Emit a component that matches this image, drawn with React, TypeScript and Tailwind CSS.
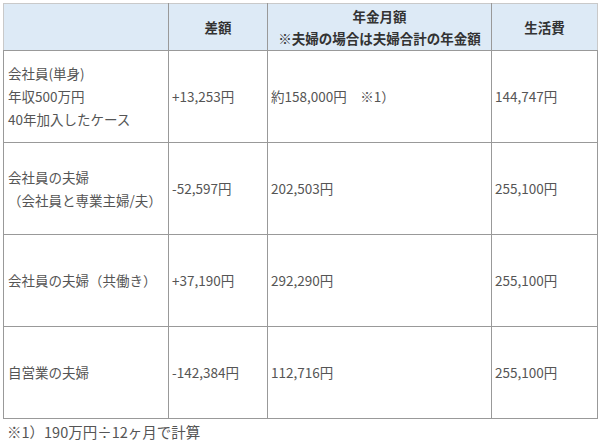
const rows = [
	{
		label: ["会社員(単身)", "年収500万円", "40年加入したケース"],
		diff: "+13,253円",
		pension: "約158,000円　※1）",
		living: "144,747円",
	},
	{
		label: ["会社員の夫婦", "（会社員と専業主婦/夫）"],
		diff: "-52,597円",
		pension: "202,503円",
		living: "255,100円",
	},
	{
		label: ["会社員の夫婦（共働き）"],
		diff: "+37,190円",
		pension: "292,290円",
		living: "255,100円",
	},
	{
		label: ["自営業の夫婦"],
		diff: "-142,384円",
		pension: "112,716円",
		living: "255,100円",
	},
];

export default function App() {
	return (
		<div
			className="w-[600px] h-[445px] bg-white pt-[3px] pl-[3px] text-[13.5px] text-[#555]"
			style={{ fontFamily: '"Noto Sans CJK JP", "Noto Sans", sans-serif' }}
		>
			<table className="table-fixed border-collapse w-[594px]">
				<colgroup>
					<col className="w-[165px]" />
					<col className="w-[99px]" />
					<col className="w-[224px]" />
					<col className="w-[106px]" />
				</colgroup>
				<thead>
					<tr className="h-[47px] bg-[#ddeaf6] text-[#333] font-bold">
						<th className="p-0 border border-[#c9c9c9] border-b-[#999] border-r-[#999]" />
						<th className="p-0 border border-[#c9c9c9] border-b-[#999] border-r-[#999] text-center">差額</th>
						<th className="p-0 border border-[#c9c9c9] border-b-[#999] border-r-[#999] text-center leading-[22px]">
							年金月額
							<br />
							※夫婦の場合は夫婦合計の年金額
						</th>
						<th className="p-0 border border-[#c9c9c9] border-b-[#999] text-center">生活費</th>
					</tr>
				</thead>
				<tbody>
					{rows.map((row, i) => (
						<tr key={i} className="h-[92px]">
							<td className="p-0 border border-[#999] pl-[4px] leading-[23px] align-middle">
								{row.label.map((line) => (
									<div key={line}>{line}</div>
								))}
							</td>
							<td className="p-0 border border-[#999] pl-[3px] align-middle">{row.diff}</td>
							<td className="p-0 border border-[#999] pl-[3px] align-middle whitespace-pre">{row.pension}</td>
							<td className="p-0 border border-[#999] pl-[3px] align-middle">{row.living}</td>
						</tr>
					))}
				</tbody>
			</table>
			<p className="mt-[3px] pl-[4px] leading-[20px] text-[14.5px]">※1）190万円÷12ヶ月で計算</p>
		</div>
	);
}
